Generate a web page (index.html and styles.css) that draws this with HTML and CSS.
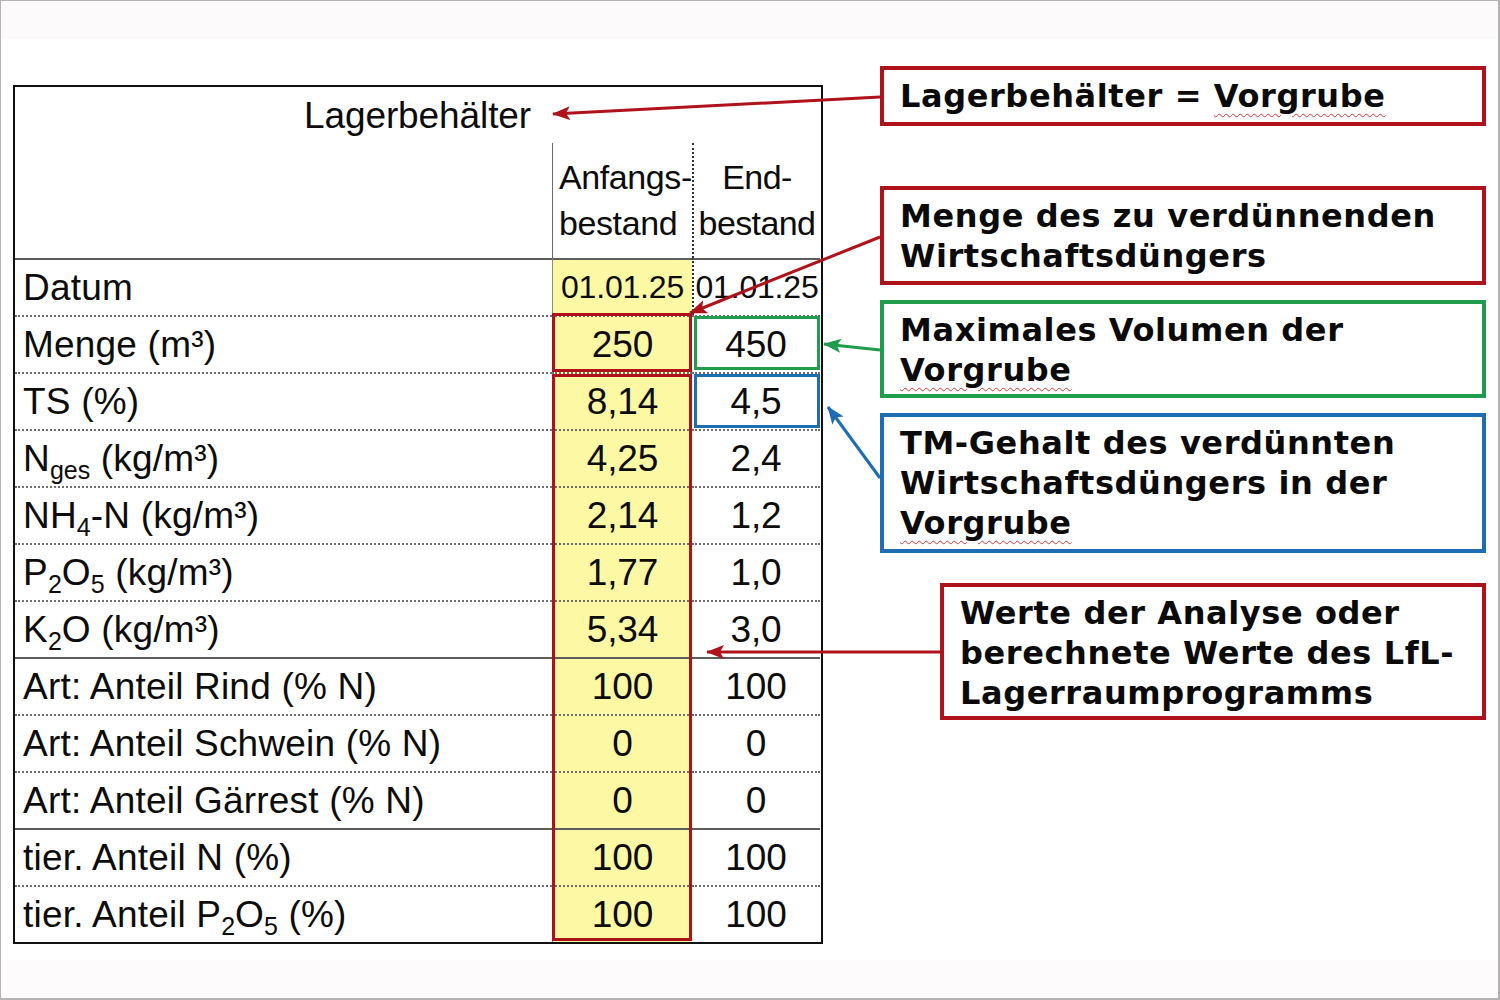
FILE: index.html
```html
<!DOCTYPE html>
<html lang="de">
<head>
<meta charset="utf-8">
<title>Lagerbehälter = Vorgrube</title>
<link rel="stylesheet" href="styles.css">
</head>
<body>
<div class="frame">
  <div class="topbar"></div>
  <div class="slide">
    <div class="table">
      <div class="head">
        <div class="title">Lagerbehälter</div>
        <div class="sub-empty"></div>
        <div class="sub-c1">Anfangs-<br>bestand</div>
        <div class="sub-c2">End-<br>bestand</div>
      </div>
      <div class="body-wrap">
        <div class="body">
          <div class="lbl solid">Datum</div>
          <div class="v1 solid date">01.01.25</div>
          <div class="v2 solid date dl">01.01.25</div>

          <div class="lbl">Menge (m³)</div>
          <div class="v1">250</div>
          <div class="v2">450</div>

          <div class="lbl">TS (%)</div>
          <div class="v1">8,14</div>
          <div class="v2">4,5</div>

          <div class="lbl">N<span class="sub">ges</span> (kg/m³)</div>
          <div class="v1">4,25</div>
          <div class="v2">2,4</div>

          <div class="lbl">NH<span class="sub">4</span>-N (kg/m³)</div>
          <div class="v1">2,14</div>
          <div class="v2">1,2</div>

          <div class="lbl">P<span class="sub">2</span>O<span class="sub">5</span> (kg/m³)</div>
          <div class="v1">1,77</div>
          <div class="v2">1,0</div>

          <div class="lbl">K<span class="sub">2</span>O (kg/m³)</div>
          <div class="v1">5,34</div>
          <div class="v2">3,0</div>

          <div class="lbl solid">Art: Anteil Rind (% N)</div>
          <div class="v1 solid">100</div>
          <div class="v2 solid">100</div>

          <div class="lbl">Art: Anteil Schwein (% N)</div>
          <div class="v1">0</div>
          <div class="v2">0</div>

          <div class="lbl">Art: Anteil Gärrest (% N)</div>
          <div class="v1">0</div>
          <div class="v2">0</div>

          <div class="lbl solid">tier. Anteil N (%)</div>
          <div class="v1 solid">100</div>
          <div class="v2 solid">100</div>

          <div class="lbl">tier. Anteil P<span class="sub">2</span>O<span class="sub">5</span> (%)</div>
          <div class="v1">100</div>
          <div class="v2">100</div>
        </div>
        <div class="marks">
          <div class="hl hl-red-menge"></div>
          <div class="hl hl-red-tall"></div>
          <div class="hl hl-green"></div>
          <div class="hl hl-blue"></div>
        </div>
      </div>
    </div>

    <div class="notes">
      <div class="note red n1">Lagerbehälter = <span class="spell">Vorgrube</span></div>
      <div class="note red n2">Menge des zu verdünnenden<br>Wirtschaftsdüngers</div>
      <div class="note green n3">Maximales Volumen der<br><span class="spell">Vorgrube</span></div>
      <div class="note blue n4">TM-Gehalt des verdünnten<br>Wirtschaftsdüngers in der<br><span class="spell">Vorgrube</span></div>
      <div class="note red n5">Werte der Analyse oder<br>berechnete Werte des LfL-<br>Lagerraumprogramms</div>
    </div>
  </div>
  <div class="bottombar"></div>

  <svg class="arrows" width="1500" height="1000" viewBox="0 0 1500 1000" aria-hidden="true">
    <defs>
      <marker id="ah-red" markerUnits="userSpaceOnUse" markerWidth="18" markerHeight="14" viewBox="0 0 18 14" refX="17" refY="7" orient="auto">
        <path d="M0,0 L18,7 L0,14 L4,7 Z" fill="#b0121b"/>
      </marker>
      <marker id="ah-green" markerUnits="userSpaceOnUse" markerWidth="18" markerHeight="14" viewBox="0 0 18 14" refX="17" refY="7" orient="auto">
        <path d="M0,0 L18,7 L0,14 L4,7 Z" fill="#1f9c4c"/>
      </marker>
      <marker id="ah-blue" markerUnits="userSpaceOnUse" markerWidth="18" markerHeight="14" viewBox="0 0 18 14" refX="17" refY="7" orient="auto">
        <path d="M0,0 L18,7 L0,14 L4,7 Z" fill="#1e6db3"/>
      </marker>
    </defs>
    <line x1="880" y1="97" x2="553" y2="114" stroke="#b0121b" stroke-width="3" marker-end="url(#ah-red)"/>
    <line x1="880" y1="237" x2="690" y2="313" stroke="#b0121b" stroke-width="3" marker-end="url(#ah-red)"/>
    <line x1="880" y1="350" x2="824" y2="344" stroke="#1f9c4c" stroke-width="3" marker-end="url(#ah-green)"/>
    <line x1="880" y1="478" x2="828" y2="407" stroke="#1e6db3" stroke-width="3" marker-end="url(#ah-blue)"/>
    <line x1="940" y1="652" x2="707" y2="652" stroke="#b0121b" stroke-width="3" marker-end="url(#ah-red)"/>
  </svg>
</div>
</body>
</html>
```

FILE: styles.css
```css
* { box-sizing: border-box; }

html, body {
  margin: 0;
  padding: 0;
  background: #ffffff;
}

.frame {
  position: relative;
  width: 1500px;
  height: 1000px;
  border: 1px solid #b4b4b4;
  border-right-width: 2px;
  border-bottom-width: 2px;
  display: flex;
  flex-direction: column;
  background: #ffffff;
  overflow: hidden;
}

.topbar {
  height: 38px;
  flex: none;
  background: #fcfafa;
}

.slide {
  flex: none;
  height: 921px;
  display: flex;
  align-items: flex-start;
  padding: 27px 0 0 12px;
  gap: 57px;
  background: #ffffff;
}

.bottombar {
  flex: 1;
  background: #fdfbfc;
}

/* ---------- table ---------- */
.table {
  width: 810px;
  margin-top: 19px;
  border: 2.5px solid #111111;
  font-family: "Liberation Sans", Arial, sans-serif;
  color: #0c0c0c;
  letter-spacing: -0.1px;
}

.head {
  display: grid;
  grid-template-columns: 537px 140px 128px;
  grid-template-rows: 56px 115px;
}

.title {
  grid-column: 1 / 4;
  text-align: center;
  font-size: 37px;
  line-height: 56px;
  padding-top: 1px;
}

.sub-c1 {
  border-left: 1.5px solid #6a6a6a;
  font-size: 34px;
  line-height: 46px;
  padding: 11px 0 0 6px;
  white-space: nowrap;
  letter-spacing: -0.4px;
}

.sub-c2 {
  border-left: 2px dotted #333;
  font-size: 34px;
  line-height: 46px;
  padding-top: 11px;
  text-align: center;
  letter-spacing: -0.6px;
}

.body-wrap {
  position: relative;
}

.body,
.marks {
  display: grid;
  grid-template-columns: 537px 140px 128px;
  grid-template-rows: repeat(12, 57px);
}

.marks {
  position: absolute;
  inset: 0;
  pointer-events: none;
}

.lbl, .v1, .v2 {
  border-top: 2px dotted #6e6e6e;
  font-size: 37px;
  line-height: 55px;
  white-space: nowrap;
}

.lbl {
  padding-left: 8px;
  letter-spacing: 0.2px;
}

.v1, .v2 {
  text-align: center;
}

.v1 {
  background: #fdf8a4;
  border-left: 1px solid #8a8a8a;
}

.solid {
  border-top: 2px solid #5c5c5c;
}

.date {
  font-size: 32px;
  letter-spacing: -0.2px;
}

.dl {
  border-left: 2px dotted #333;
}

.sub {
  font-size: 25px;
  line-height: 0;
  vertical-align: -8px;
  letter-spacing: 0;
}

/* highlight overlays placed on the grid */
.hl {
  border-style: solid;
  border-width: 3px;
}

.hl-red-menge {
  grid-column: 2;
  grid-row: 2;
  border-color: #b0121b;
  margin: -2px 0 0 0;
}

.hl-red-tall {
  grid-column: 2;
  grid-row: 3 / 13;
  border-color: #b0121b;
  margin: 2px 0 1px 0;
}

.hl-green {
  grid-column: 3;
  grid-row: 2;
  border-color: #1f9c4c;
  margin: 1px 0 2px 2px;
}

.hl-blue {
  grid-column: 3;
  grid-row: 3;
  border-color: #1e6db3;
  margin: 2px 0 1px 2px;
}

/* ---------- callouts ---------- */
.notes {
  width: 606px;
  display: flex;
  flex-direction: column;
  font-family: "DejaVu Sans", Verdana, sans-serif;
  font-weight: bold;
  color: #0a0a0a;
}

.note {
  border: 4px solid;
  padding: 6px 16px;
  font-size: 32px;
  line-height: 40px;
  letter-spacing: 0.6px;
  background: #ffffff;
  white-space: nowrap;
}

.red { border-color: #b0121b; }
.green { border-color: #1f9c4c; }
.blue { border-color: #1e6db3; }

.n1 { height: 60px; }
.n2 { margin-top: 60px; height: 99px; }
.n3 { margin-top: 15px; height: 98px; }
.n4 { margin-top: 15px; height: 140px; }
.n5 { margin-top: 30px; margin-left: 60px; height: 137px; }

.spell {
  text-decoration: underline wavy #d33a3a;
  text-decoration-thickness: 1px;
  text-underline-offset: 6px;
}

.arrows {
  position: absolute;
  left: -1px;
  top: -1px;
  pointer-events: none;
}
```
